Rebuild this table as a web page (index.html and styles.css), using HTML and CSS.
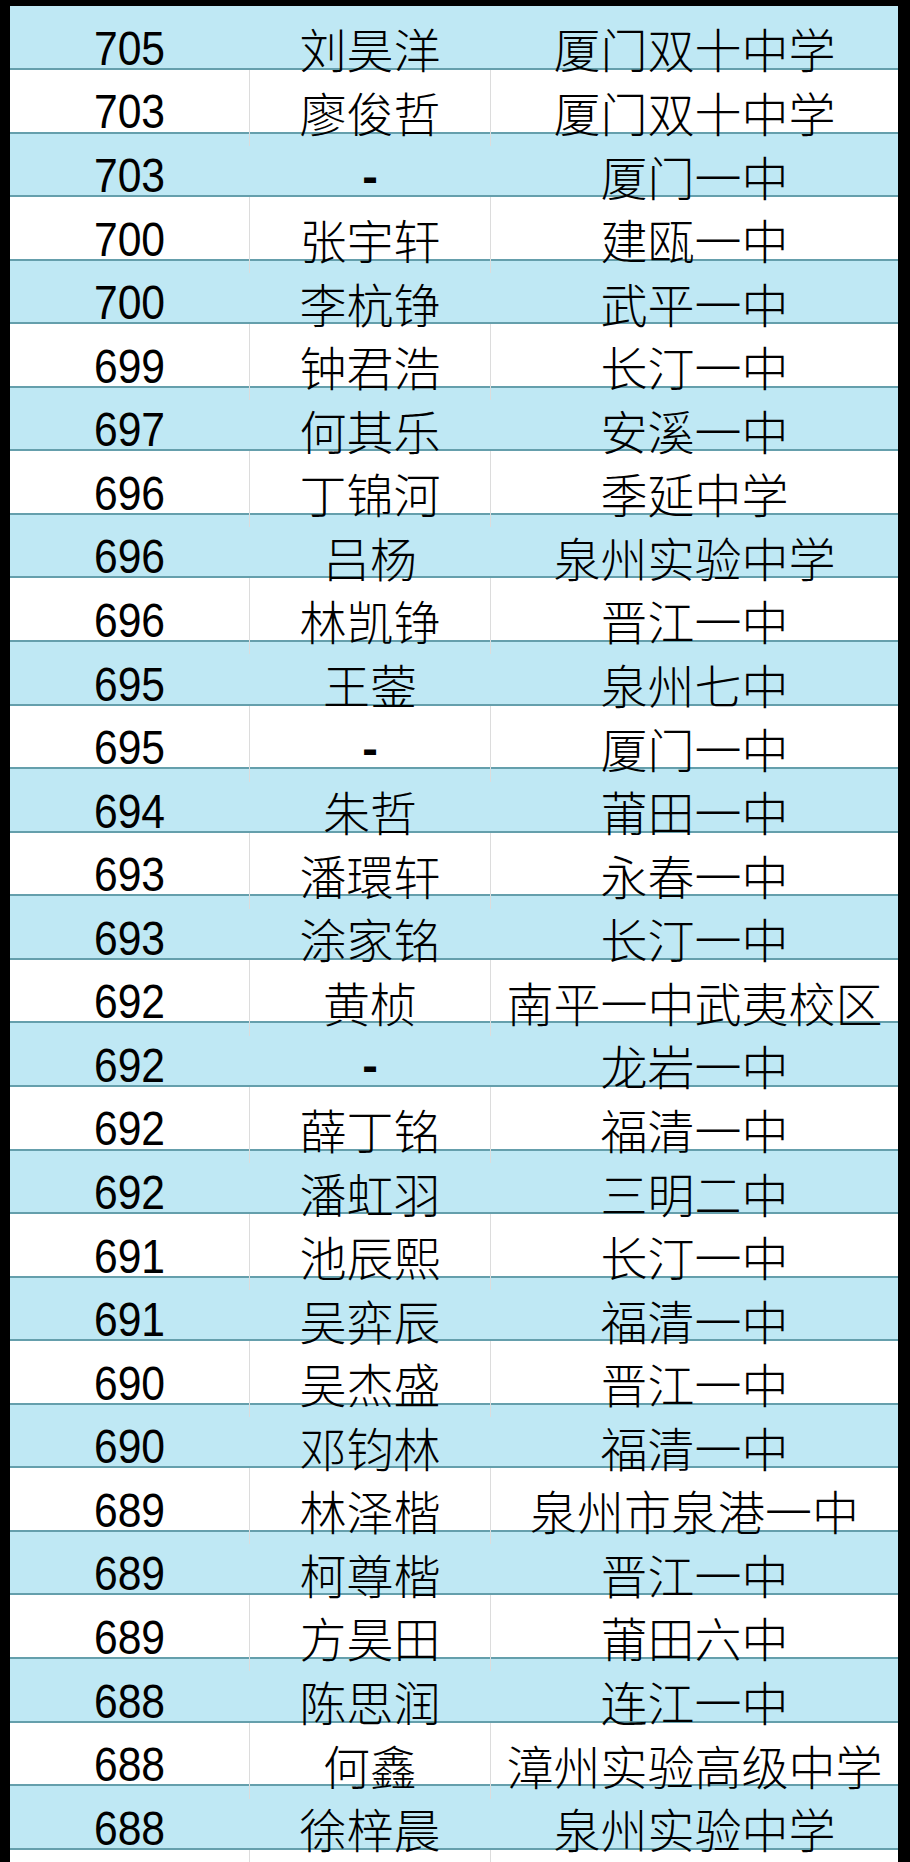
FILE: index.html
```html
<!DOCTYPE html>
<html lang="zh">
<head>
<meta charset="utf-8">
<title>成绩表</title>
<link rel="stylesheet" href="styles.css">
</head>
<body>
<div class="sheet">
  <div class="row"><span class="c score">705</span><span class="c name">刘昊洋</span><span class="c school">厦门双十中学</span></div>
  <div class="row"><span class="c score">703</span><span class="c name">廖俊哲</span><span class="c school">厦门双十中学</span></div>
  <div class="row"><span class="c score">703</span><span class="c name dash">-</span><span class="c school">厦门一中</span></div>
  <div class="row"><span class="c score">700</span><span class="c name">张宇轩</span><span class="c school">建瓯一中</span></div>
  <div class="row"><span class="c score">700</span><span class="c name">李杭铮</span><span class="c school">武平一中</span></div>
  <div class="row"><span class="c score">699</span><span class="c name">钟君浩</span><span class="c school">长汀一中</span></div>
  <div class="row"><span class="c score">697</span><span class="c name">何其乐</span><span class="c school">安溪一中</span></div>
  <div class="row"><span class="c score">696</span><span class="c name">丁锦河</span><span class="c school">季延中学</span></div>
  <div class="row"><span class="c score">696</span><span class="c name">吕杨</span><span class="c school">泉州实验中学</span></div>
  <div class="row"><span class="c score">696</span><span class="c name">林凯铮</span><span class="c school">晋江一中</span></div>
  <div class="row"><span class="c score">695</span><span class="c name">王蓥</span><span class="c school">泉州七中</span></div>
  <div class="row"><span class="c score">695</span><span class="c name dash">-</span><span class="c school">厦门一中</span></div>
  <div class="row"><span class="c score">694</span><span class="c name">朱哲</span><span class="c school">莆田一中</span></div>
  <div class="row"><span class="c score">693</span><span class="c name">潘環轩</span><span class="c school">永春一中</span></div>
  <div class="row"><span class="c score">693</span><span class="c name">涂家铭</span><span class="c school">长汀一中</span></div>
  <div class="row"><span class="c score">692</span><span class="c name">黄桢</span><span class="c school">南平一中武夷校区</span></div>
  <div class="row"><span class="c score">692</span><span class="c name dash">-</span><span class="c school">龙岩一中</span></div>
  <div class="row"><span class="c score">692</span><span class="c name">薛丁铭</span><span class="c school">福清一中</span></div>
  <div class="row"><span class="c score">692</span><span class="c name">潘虹羽</span><span class="c school">三明二中</span></div>
  <div class="row"><span class="c score">691</span><span class="c name">池辰熙</span><span class="c school">长汀一中</span></div>
  <div class="row"><span class="c score">691</span><span class="c name">吴弈辰</span><span class="c school">福清一中</span></div>
  <div class="row"><span class="c score">690</span><span class="c name">吴杰盛</span><span class="c school">晋江一中</span></div>
  <div class="row"><span class="c score">690</span><span class="c name">邓钧林</span><span class="c school">福清一中</span></div>
  <div class="row"><span class="c score">689</span><span class="c name">林泽楷</span><span class="c school">泉州市泉港一中</span></div>
  <div class="row"><span class="c score">689</span><span class="c name">柯尊楷</span><span class="c school">晋江一中</span></div>
  <div class="row"><span class="c score">689</span><span class="c name">方昊田</span><span class="c school">莆田六中</span></div>
  <div class="row"><span class="c score">688</span><span class="c name">陈思润</span><span class="c school">连江一中</span></div>
  <div class="row"><span class="c score">688</span><span class="c name">何鑫</span><span class="c school">漳州实验高级中学</span></div>
  <div class="row"><span class="c score">688</span><span class="c name">徐梓晨</span><span class="c school">泉州实验中学</span></div>
  <div class="row"><span class="c score"></span><span class="c name"></span><span class="c school"></span></div>
</div>
</body>
</html>
```
FILE: styles.css
```css
html, body {
  margin: 0;
  padding: 0;
  background: #000;
}
body {
  height: 1862px;
  overflow: hidden;
}
.sheet {
  margin-left: 10px;
  width: 888px;
  padding-top: 6.4px;
}
.row {
  display: grid;
  grid-template-columns: 239px 241px 408px;
  height: 63.57px;
  box-sizing: border-box;
  border-bottom: 2px solid #659fac;
  background: #ffffff;
}
.row:nth-child(odd) {
  background: #bfe8f4;
}
.c {
  display: flex;
  align-items: center;
  justify-content: center;
  padding-top: 7px;
  box-sizing: border-box;
  color: #000;
  white-space: nowrap;
}
.name, .school {
  border-left: 1.5px solid #dcdcdc;
  font-family: "Noto Sans CJK SC", sans-serif;
  font-size: 47px;
  font-weight: 300;
}
.row:nth-child(odd) .name,
.row:nth-child(odd) .school {
  border-left-color: transparent;
}
.score {
  font-family: "Liberation Sans", sans-serif;
  font-size: 49px;
  transform: scaleX(0.87);
}
.dash {
  font-family: "Liberation Sans", sans-serif;
  font-weight: 700;
}
```
